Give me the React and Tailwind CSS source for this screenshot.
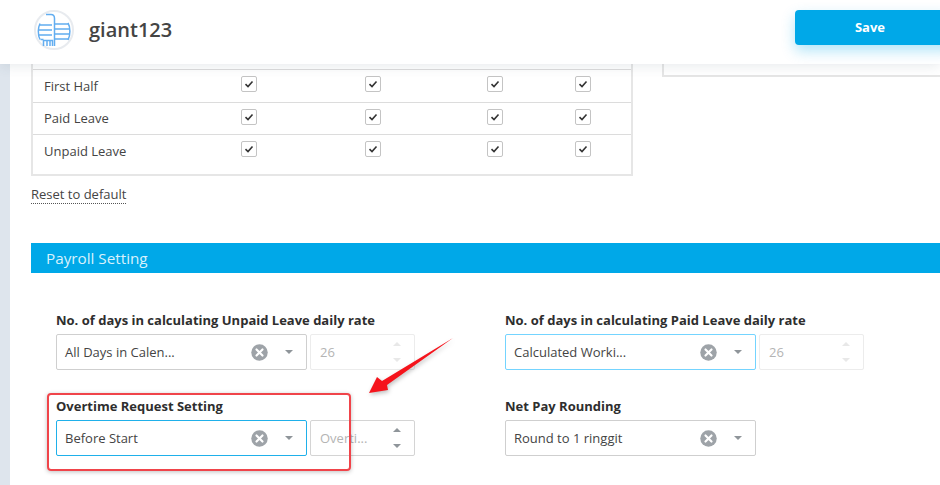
const rows = ["First Half", "Paid Leave", "Unpaid Leave"];

function Logo() {
  return (
    <div className="flex h-10 w-10 items-center justify-center rounded-full border-2 border-[#e8ebef] bg-white">
      <svg width="34" height="34" viewBox="0 0 34 34" fill="none" stroke="#62adf0" strokeWidth="1.5">
        <path d="M3 12h12M2 17h13M2 22h13M3.500 26.500h3" />
        <path d="M3 10.500c-2 4-2.500 11 0 16" />
        <path d="M9 1.500h5c3 0 3.500 2 3.500 4V33" />
        <path d="M18 11h13M18 16h15M18 21h15M18 26h13" />
        <path d="M31 10c2.500 4 2.500 12 0 17" />
        <path d="M6.500 33v-5.500h9V33M10 28v5M13 28v5" />
      </svg>
    </div>
  );
}

function Check() {
  return (
    <div className="mb-[4px] flex h-4 w-4 items-center justify-center rounded-[2px] border border-[#c4c4c4] bg-white">
      <svg width="10" height="10" viewBox="0 0 10 10" fill="none" stroke="#333" strokeWidth="1.6">
        <path d="M1.500 5.200 4 7.500 8.500 2.500" />
      </svg>
    </div>
  );
}

function ClearIcon() {
  return (
    <svg width="17" height="17" viewBox="0 0 17 17">
      <circle cx="8.500" cy="8.500" r="8.250" fill="#9ea3a8" />
      <path d="M5.500 5.500l6 6M11.500 5.500l-6 6" stroke="#fff" strokeWidth="2.200" strokeLinecap="round" />
    </svg>
  );
}

function Select({ value, border = "border-[#cfcfcf]" }) {
  return (
    <div className={`flex h-9 w-[251px] items-center rounded-[2px] border bg-white pl-[8px] ${border}`}>
      <span className="flex-1 pt-[1px] text-[13px] text-[#444]">{value}</span>
      <ClearIcon />
      <div className="ml-[17px] mr-[13px] h-0 w-0 border-x-[4px] border-t-[4px] border-x-transparent border-t-[#8f959a]" />
    </div>
  );
}

function Spinner({ value, placeholder }) {
  const disabled = !placeholder;
  const arrow = disabled ? "#e8e8e8" : "#8f959a";
  return (
    <div className={`ml-[3px] flex h-9 w-[105px] items-center rounded-[2px] border bg-white pl-[9px] pr-[13px] ${disabled ? "border-[#ececec]" : "border-[#d4d4d4]"}`}>
      <span className="flex-1 pt-[1px] text-[13px] text-[#b4b4b4]">{value || placeholder}</span>
      <div className="flex flex-col gap-[12px]">
        <div className="h-0 w-0 border-x-[4px] border-b-[4px] border-x-transparent" style={{ borderBottomColor: arrow }} />
        <div className="h-0 w-0 border-x-[4px] border-t-[4px] border-x-transparent" style={{ borderTopColor: arrow }} />
      </div>
    </div>
  );
}

function Field({ label, children }) {
  return (
    <div>
      <div className="mb-[5px] text-[13px] leading-[18px] font-bold text-[#2e2e2e]">{label}</div>
      <div className="flex">{children}</div>
    </div>
  );
}

export default function App() {
  return (
    <div className="relative h-[485px] w-[940px] overflow-hidden bg-white font-['Open_Sans',sans-serif]">
      {/* Top bar */}
      <div className="relative z-10 flex h-16 items-center bg-white pb-[4px] pl-[34px] shadow-[0_2px_12px_rgba(60,80,100,0.12)]">
        <Logo />
        <span className="ml-[15px] text-[20px] font-semibold text-[#444]">giant123</span>
        <button className="absolute left-[795px] top-[10px] h-[35px] w-[160px] rounded-[4px] bg-[#00a8e8] pr-[10px] text-[13px] font-bold text-white shadow-[0_6px_14px_rgba(0,168,232,0.3)]">
          Save
        </button>
      </div>

      <div className="flex h-[421px]">
        <div className="w-[10px] shrink-0 bg-[#dee5ed]" />
        <div className="flex-1 pl-[21px]">
          <div className="flex items-start">
            {/* Permissions table */}
            <div className="h-[112px] w-[602px] border-x-2 border-b-2 border-[#e6e6e6]">
              <div className="h-[5px]" />
              {rows.map((row, i) => (
                <div key={row} className={`flex items-center border-t border-[#dcdcdc] pl-[11px] ${i == 1 ? "h-[32px]" : "h-[33px]"}`}>
                  <span className="w-[197px] pt-[1px] text-[13px] text-[#444]">{row}</span>
                  <div className="w-[124px]"><Check /></div>
                  <div className="w-[122px]"><Check /></div>
                  <div className="w-[88px]"><Check /></div>
                  <Check />
                </div>
              ))}
            </div>
            <div className="ml-[29px] h-[13px] flex-1 border-b-2 border-l-2 border-[#e6e6e6]" />
          </div>

          <div className="mt-[5px]">
            <span className="border-b border-dotted border-[#555] text-[13px] text-[#444]">Reset to default</span>
          </div>

          <div className="mt-[38px] flex h-[30px] items-center bg-[#00a8e8] pl-[15px] pt-[1px] text-[15.25px] text-[#d8f1fc]">
            Payroll Setting
          </div>

          <div className="grid grid-cols-[449px_1fr] gap-y-[27px] pl-[25px] pt-[38px]">
            <Field label="No. of days in calculating Unpaid Leave daily rate">
              <Select value="All Days in Calen..." />
              <Spinner value="26" />
            </Field>
            <Field label="No. of days in calculating Paid Leave daily rate">
              <Select value="Calculated Worki..." border="border-sky-300" />
              <Spinner value="26" />
            </Field>
            <Field label="Overtime Request Setting">
              <Select value="Before Start" border="border-[#1fb0ea]" />
              <Spinner placeholder="Overti..." />
            </Field>
            <Field label="Net Pay Rounding">
              <Select value="Round to 1 ringgit" />
            </Field>
          </div>
        </div>
      </div>

      {/* Annotation */}
      <div className="absolute left-[47px] top-[393px] h-[78px] w-[304px] rounded-[4px] border-2 border-[#f0444a] shadow-[0_1px_4px_rgba(0,0,0,0.25)]" />
      <svg className="absolute left-[360px] top-[330px] drop-shadow-[1px_2px_2px_rgba(0,0,0,0.25)]" width="100" height="70" viewBox="0 0 100 70">
        <path d="M9 63 17 47 22 51 93 8 27 55 28 60Z" fill="#f5141c" />
      </svg>
    </div>
  );
}
